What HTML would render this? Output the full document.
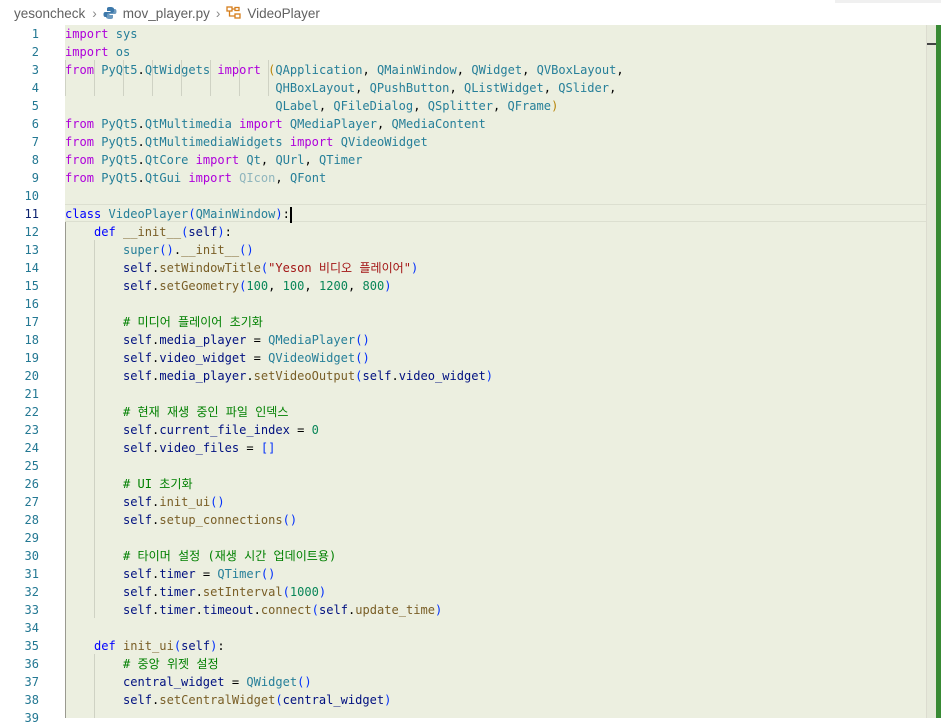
<!DOCTYPE html>
<html><head><meta charset="utf-8"><style>
body{margin:0;width:941px;height:718px;overflow:hidden;background:#fff;position:relative;font-family:"DejaVu Sans Mono","Liberation Mono","Noto Sans CJK KR",monospace;}
.top{position:absolute;left:835px;top:0;width:106px;height:3px;background:#f0f0f0}
.bc{position:absolute;left:14px;top:6px;font:13.5px "Liberation Sans",sans-serif;color:#616161;white-space:nowrap}
.bc span{display:inline-block}
.code{position:absolute;left:65px;top:25px;width:861px;height:693px;background:#ecefe0}
.ln{position:absolute;left:0;width:39px;text-align:right;font-size:12px;color:#237893;line-height:18px;top:1px}
.l{position:absolute;left:65px;font-size:12.05px;line-height:18px;white-space:pre;color:#001080;margin-top:1px}
.k{color:#af00db}.c{color:#0000ff}.t{color:#267f99}.f{color:#795e26}.n{color:#098658}.st{color:#a31515}.cm{color:#008000;font-family:"DejaVu Sans Mono","Noto Sans CJK KR",monospace}.p{color:#0431fa}.y{color:#b8860b}.g{color:#8fb5bd}.d{color:#000}
.gd{position:absolute;width:1px;background:#cfd2c4}
.cur{position:absolute;left:65px;top:204px;width:861px;height:18px;border-top:1px solid #dcdfd0;border-bottom:1px solid #dcdfd0;box-sizing:border-box}
</style></head><body>
<div class="top"></div>
<div class="bc">yesoncheck<span style="color:#888;margin:0 6px 0 7px">›</span><svg width="14" height="14" viewBox="0 0 14 14" style="vertical-align:-2px;margin-right:6px"><path d="M7 1C4 1 4 2 4 3v2h3.5v1H2.5C1 6 0.5 7 0.5 8.5S1 11 2.5 11H4V9c0-1 1-2 2-2h3c1 0 2-1 2-2V3c0-1-1-2-4-2z" fill="#3c78aa"/><path d="M7 13c3 0 3-1 3-2V9H6.5V8h5c1.5 0 2-1 2-2.5S13 3 11.5 3H10v2c0 1-1 2-2 2H5c-1 0-2 1-2 2v2c0 1 1 2 4 2z" fill="#3c78aa" opacity=".75"/></svg>mov_player.py<span style="color:#888;margin:0 6px 0 6px">›</span><svg width="16" height="14" viewBox="0 0 16 14" style="vertical-align:-2px;margin-right:5px"><g fill="none" stroke="#d67e1c" stroke-width="1.3"><rect x="1" y="1" width="5" height="4"/><rect x="9" y="8" width="5" height="4"/><path d="M6 3h3M3.5 5v5h5.5"/><rect x="9" y="1.5" width="4" height="3"/></g></svg>VideoPlayer</div>
<div class="code"></div>
<div class="cur"></div>
<div style="position:absolute;left:926px;top:25px;width:10px;height:693px;background:#e6e9da;border-left:1px solid #dcdcd0"></div>
<div style="position:absolute;left:927px;top:43px;width:13px;height:2px;background:#444"></div>
<div style="position:absolute;left:936px;top:25px;width:5px;height:693px;background:#388a34"></div>
<div class="gd" style="left:94px;top:60px;height:36px"></div><div class="gd" style="left:123px;top:60px;height:36px"></div><div class="gd" style="left:152px;top:60px;height:36px"></div><div class="gd" style="left:181px;top:60px;height:36px"></div><div class="gd" style="left:210px;top:60px;height:36px"></div><div class="gd" style="left:239px;top:60px;height:36px"></div><div class="gd" style="left:268px;top:60px;height:36px"></div>
<div class="gd" style="left:65px;top:60px;height:36px"></div>
<div class="gd" style="left:65px;top:222px;height:496px;background:#9a9a90"></div>
<div class="gd" style="left:94px;top:240px;height:378px"></div>
<div class="gd" style="left:94px;top:654px;height:64px"></div>
<div class="ln" style="top:25px">1</div><div class="ln" style="top:43px">2</div><div class="ln" style="top:61px">3</div><div class="ln" style="top:79px">4</div><div class="ln" style="top:97px">5</div><div class="ln" style="top:115px">6</div><div class="ln" style="top:133px">7</div><div class="ln" style="top:151px">8</div><div class="ln" style="top:169px">9</div><div class="ln" style="top:187px">10</div><div class="ln" style="top:205px;color:#0b216f">11</div><div class="ln" style="top:223px">12</div><div class="ln" style="top:241px">13</div><div class="ln" style="top:259px">14</div><div class="ln" style="top:277px">15</div><div class="ln" style="top:295px">16</div><div class="ln" style="top:313px">17</div><div class="ln" style="top:331px">18</div><div class="ln" style="top:349px">19</div><div class="ln" style="top:367px">20</div><div class="ln" style="top:385px">21</div><div class="ln" style="top:403px">22</div><div class="ln" style="top:421px">23</div><div class="ln" style="top:439px">24</div><div class="ln" style="top:457px">25</div><div class="ln" style="top:475px">26</div><div class="ln" style="top:493px">27</div><div class="ln" style="top:511px">28</div><div class="ln" style="top:529px">29</div><div class="ln" style="top:547px">30</div><div class="ln" style="top:565px">31</div><div class="ln" style="top:583px">32</div><div class="ln" style="top:601px">33</div><div class="ln" style="top:619px">34</div><div class="ln" style="top:637px">35</div><div class="ln" style="top:655px">36</div><div class="ln" style="top:673px">37</div><div class="ln" style="top:691px">38</div><div class="ln" style="top:709px">39</div>

<div class="l" style="top:24px"><span class="k">import</span> <span class="t">sys</span></div>
<div class="l" style="top:42px"><span class="k">import</span> <span class="t">os</span></div>
<div class="l" style="top:60px"><span class="k">from</span> <span class="t">PyQt5</span><span class="d">.</span><span class="t">QtWidgets</span> <span class="k">import</span> <span class="y">(</span><span class="t">QApplication</span><span class="d">,</span> <span class="t">QMainWindow</span><span class="d">,</span> <span class="t">QWidget</span><span class="d">,</span> <span class="t">QVBoxLayout</span><span class="d">,</span></div>
<div class="l" style="top:78px">                             <span class="t">QHBoxLayout</span><span class="d">,</span> <span class="t">QPushButton</span><span class="d">,</span> <span class="t">QListWidget</span><span class="d">,</span> <span class="t">QSlider</span><span class="d">,</span></div>
<div class="l" style="top:96px">                             <span class="t">QLabel</span><span class="d">,</span> <span class="t">QFileDialog</span><span class="d">,</span> <span class="t">QSplitter</span><span class="d">,</span> <span class="t">QFrame</span><span class="y">)</span></div>
<div class="l" style="top:114px"><span class="k">from</span> <span class="t">PyQt5</span><span class="d">.</span><span class="t">QtMultimedia</span> <span class="k">import</span> <span class="t">QMediaPlayer</span><span class="d">,</span> <span class="t">QMediaContent</span></div>
<div class="l" style="top:132px"><span class="k">from</span> <span class="t">PyQt5</span><span class="d">.</span><span class="t">QtMultimediaWidgets</span> <span class="k">import</span> <span class="t">QVideoWidget</span></div>
<div class="l" style="top:150px"><span class="k">from</span> <span class="t">PyQt5</span><span class="d">.</span><span class="t">QtCore</span> <span class="k">import</span> <span class="t">Qt</span><span class="d">,</span> <span class="t">QUrl</span><span class="d">,</span> <span class="t">QTimer</span></div>
<div class="l" style="top:168px"><span class="k">from</span> <span class="t">PyQt5</span><span class="d">.</span><span class="t">QtGui</span> <span class="k">import</span> <span class="g">QIcon</span><span class="d">,</span> <span class="t">QFont</span></div>
<div class="l" style="top:204px"><span class="c">class</span> <span class="t">VideoPlayer</span><span class="p">(</span><span class="t">QMainWindow</span><span class="p">)</span><span class="d">:</span><span style="display:inline-block;width:2px;height:16px;background:#000;vertical-align:middle"></span></div>
<div class="l" style="top:222px">    <span class="c">def</span> <span class="f">__init__</span><span class="p">(</span>self<span class="p">)</span><span class="d">:</span></div>
<div class="l" style="top:240px">        <span class="t">super</span><span class="p">()</span><span class="d">.</span><span class="f">__init__</span><span class="p">()</span></div>
<div class="l" style="top:258px">        self<span class="d">.</span><span class="f">setWindowTitle</span><span class="p">(</span><span class="st">"Yeson 비디오 플레이어"</span><span class="p">)</span></div>
<div class="l" style="top:276px">        self<span class="d">.</span><span class="f">setGeometry</span><span class="p">(</span><span class="n">100</span><span class="d">,</span> <span class="n">100</span><span class="d">,</span> <span class="n">1200</span><span class="d">,</span> <span class="n">800</span><span class="p">)</span></div>
<div class="l" style="top:312px">        <span class="cm"># 미디어 플레이어 초기화</span></div>
<div class="l" style="top:330px">        self<span class="d">.</span>media_player <span class="d">=</span> <span class="t">QMediaPlayer</span><span class="p">()</span></div>
<div class="l" style="top:348px">        self<span class="d">.</span>video_widget <span class="d">=</span> <span class="t">QVideoWidget</span><span class="p">()</span></div>
<div class="l" style="top:366px">        self<span class="d">.</span>media_player<span class="d">.</span><span class="f">setVideoOutput</span><span class="p">(</span>self<span class="d">.</span>video_widget<span class="p">)</span></div>
<div class="l" style="top:402px">        <span class="cm"># 현재 재생 중인 파일 인덱스</span></div>
<div class="l" style="top:420px">        self<span class="d">.</span>current_file_index <span class="d">=</span> <span class="n">0</span></div>
<div class="l" style="top:438px">        self<span class="d">.</span>video_files <span class="d">=</span> <span class="p">[]</span></div>
<div class="l" style="top:474px">        <span class="cm"># UI 초기화</span></div>
<div class="l" style="top:492px">        self<span class="d">.</span><span class="f">init_ui</span><span class="p">()</span></div>
<div class="l" style="top:510px">        self<span class="d">.</span><span class="f">setup_connections</span><span class="p">()</span></div>
<div class="l" style="top:546px">        <span class="cm"># 타이머 설정 (재생 시간 업데이트용)</span></div>
<div class="l" style="top:564px">        self<span class="d">.</span>timer <span class="d">=</span> <span class="t">QTimer</span><span class="p">()</span></div>
<div class="l" style="top:582px">        self<span class="d">.</span>timer<span class="d">.</span><span class="f">setInterval</span><span class="p">(</span><span class="n">1000</span><span class="p">)</span></div>
<div class="l" style="top:600px">        self<span class="d">.</span>timer<span class="d">.</span>timeout<span class="d">.</span><span class="f">connect</span><span class="p">(</span>self<span class="d">.</span><span class="f">update_time</span><span class="p">)</span></div>
<div class="l" style="top:636px">    <span class="c">def</span> <span class="f">init_ui</span><span class="p">(</span>self<span class="p">)</span><span class="d">:</span></div>
<div class="l" style="top:654px">        <span class="cm"># 중앙 위젯 설정</span></div>
<div class="l" style="top:672px">        central_widget <span class="d">=</span> <span class="t">QWidget</span><span class="p">()</span></div>
<div class="l" style="top:690px">        self<span class="d">.</span><span class="f">setCentralWidget</span><span class="p">(</span>central_widget<span class="p">)</span></div>
</body></html>
